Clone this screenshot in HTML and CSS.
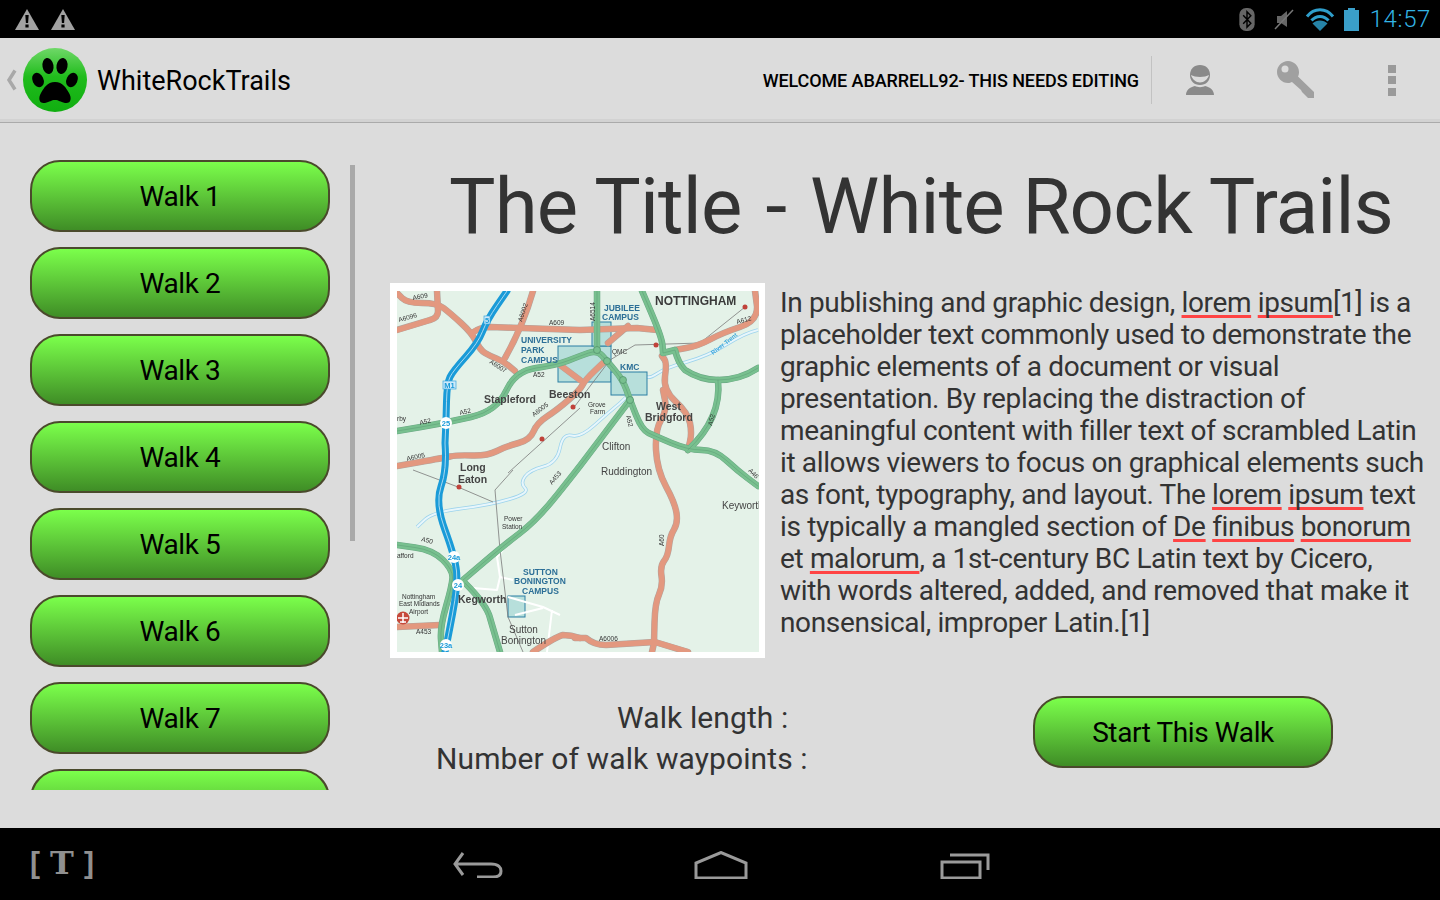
FILE: index.html
```html
<!DOCTYPE html>
<html lang="en">
<head>
<meta charset="utf-8">
<title>WhiteRockTrails</title>
<link rel="stylesheet" href="styles.css">
</head>
<body>
<div class="app">
  <div class="status">
    <div class="status-left">
      <svg class="warn" viewBox="0 0 24 21"><path class="ic-grey" d="M12 0 24 21H0Z"/><path class="ic-black" d="M10.300 6h3.400l-.6 8h-2.200ZM10.400 15.500h3.200v3h-3.200Z"/></svg>
      <svg class="warn" viewBox="0 0 24 21"><path class="ic-grey" d="M12 0 24 21H0Z"/><path class="ic-black" d="M10.300 6h3.400l-.6 8h-2.200ZM10.400 15.500h3.200v3h-3.200Z"/></svg>
    </div>
    <div class="status-right">
      <svg class="ic-bt" viewBox="0 0 16 24"><rect class="ic-dim" width="16" height="24" rx="7"/><path class="ic-blackline" d="M4 7.500 12 16l-4 4V4l4 4-8 8.500"/></svg>
      <svg class="ic-mute" viewBox="0 0 20 22"><path class="ic-dim" d="M3 8h4l6-5v16l-6-4H3Z"/><path class="ic-slash" d="M1 21 19 2"/></svg>
      <svg class="ic-wifi" viewBox="0 0 30 23"><path class="wf" d="M2 8.500C9-.5 21-.5 28 8.500"/><path class="wf" d="M6.500 12.500C11 7 19 7 23.500 12.500"/><path class="wf-dark" d="M15 23 7.500 15.500C11.500 11.500 18.500 11.500 22.500 15.500Z"/></svg>
      <svg class="ic-batt" viewBox="0 0 15 23"><path class="ic-blue" d="M4 0h7v2h4v21H0V2h4Z"/></svg>
      <span class="clock">14:57</span>
    </div>
  </div>

  <header class="bar">
    <svg class="chev" viewBox="0 0 11 22"><path class="chev-line" d="M9 1.500 3 11l6 9.500"/></svg>
    <svg class="logo" viewBox="0 0 64 64">
      <defs><linearGradient id="lg" x1="0" y1="0" x2="0" y2="1"><stop offset="0" stop-color="#6fd868"/><stop offset=".45" stop-color="#20bc1c"/><stop offset="1" stop-color="#10ae10"/></linearGradient></defs>
      <circle cx="32" cy="32" r="32" fill="url(#lg)"/>
      <ellipse cx="15" cy="32" rx="5.500" ry="7.500" transform="rotate(-25 15 32)"/>
      <ellipse cx="25" cy="18" rx="5.500" ry="8" transform="rotate(-10 25 18)"/>
      <ellipse cx="39" cy="18" rx="5.500" ry="8" transform="rotate(10 39 18)"/>
      <ellipse cx="49" cy="32" rx="5.500" ry="7.500" transform="rotate(25 49 32)"/>
      <path d="M32 34C40 34 43 40 46 45 49 50 48 56 42 55 37 54 36 52 32 52 28 52 27 54 22 55 16 56 15 50 18 45 21 40 24 34 32 34Z"/>
    </svg>
    <span class="app-name">WhiteRockTrails</span>
    <span class="welcome">WELCOME ABARRELL92- THIS NEEDS EDITING</span>
    <span class="divider"></span>
    <svg class="act-person" viewBox="0 0 28 30"><path class="ic-person" d="M14 0C20 0 24 4 24 10 24 16 20 20 14 20 8 20 4 16 4 10 4 4 8 0 14 0Z"/><path class="ic-smile" d="M5 10C9 12.500 19 12.500 23 10 22 14 18 17.500 14 17.500 10 17.500 6 14 5 10Z"/><path class="ic-person" d="M9 21C11 22.500 17 22.500 19 21 24 22 28 25 28 30H0C0 25 4 22 9 21Z"/></svg>
    <svg class="act-key" viewBox="0 0 38 38"><path class="ic-keyc" d="M11 0C17 0 22 5 22 11 22 13 21.500 14.500 21 15.500L37 31V37H31L29 35 27 33 25 31 24 29 15 21C14 21.500 12.500 22 11 22 5 22 0 17 0 11 0 5 5 0 11 0Z"/><circle class="ic-keyh" cx="8" cy="8" r="3.500"/></svg>
    <div class="overflow"><i></i><i></i><i></i></div>
  </header>

  <main class="main">
    <aside class="side">
      <div class="list">
        <button class="btn">Walk 1</button>
        <button class="btn">Walk 2</button>
        <button class="btn">Walk 3</button>
        <button class="btn">Walk 4</button>
        <button class="btn">Walk 5</button>
        <button class="btn">Walk 6</button>
        <button class="btn">Walk 7</button>
        <button class="btn">Walk 8</button>
      </div>
      <div class="scroll"></div>
    </aside>
    <section class="detail">
      <h1 class="title">The Title <span class="dash">-</span> White Rock Trails</h1>
      <div class="media">
        <div class="frame">
        <svg class="map" viewBox="7 8 362 361">
          <defs>
            <g id="pink">
              <path d="M7 10 12 15Q17 20 32 20 47 20 53.500 25 60 30 71 40 82 50 86 58.500 90 67 95 70 100 73 106.500 75.500 113 78 119 83L125 88"/>
              <path d="M7 47 40 37Q48 35 48 28L47 8"/>
              <path d="M82 50Q90 44 100 44L190 47 247 45 267 47"/>
              <path d="M143 8Q133 43 115 75"/>
              <path d="M238 43 218 60"/>
              <path d="M7 183 30 179Q53 175 60 173.500 67 172 82 172.500 97 173 107 168 117 163 128.500 160 140 157 143.500 148.500 147 140 157 133.500 167 127 178.500 117 190 107 192.500 102 195 97 205 87.500L215 78"/>
              <path d="M170 82 190 97"/>
              <path d="M272 73 274.500 76.500Q277 80 275 93.500 273 107 285.500 118.500 298 130 300 140 302 150 300 158.500L298 167"/>
              <path d="M273 107 275 117Q277 127 271 137 265 147 266 167 267 187 276 203.500 285 220 286.500 230 288 240 284 246.500 280 253 279 263 278 273 274 278 270 283 271.500 293 273 303 269 311.500 265 320 264.500 340L264 360 262 369"/>
              <path d="M185 355H196Q204 362 216 362L265 359 298 369"/>
              <path d="M143 369Q165 354 173 352 181 352 190 355"/>
              <path d="M7 344 50 342"/>
              <path d="M285 67 296 65Q308 63 320 56.500 332 50 350 44 368 38 367 23L365 8"/>
            </g>
            <g id="green">
              <path d="M7 148 31 144Q55 140 81 134 107 128 116 108 125 88 146 85 167 82 178.500 77.500 190 73 198.500 70 207 67 212 72.500 217 78 225 87.500 233 97 236.500 107 240 117 246 132 252 147 258.500 150 265 153 281.500 160 298 167 311.500 167 325 167 336.500 177.500 348 188 358 195.500L368 203"/>
              <path d="M207 8V67"/>
              <path d="M252 8 262 31.500Q272 55 272.500 62.500L273 70 285 67Q288 80 295 87 310 97 328 97 350 97 368 85"/>
              <path d="M328 97Q332 135 298 167"/>
              <path d="M240 117 222.500 140Q205 163 196 175 187 187 167 212 147 237 130 250 113 263 93 280L73 297"/>
              <path d="M75 300Q97 322 100 335L110 369"/>
              <path d="M7 262 25 264.500Q43 267 53 277 63 287 62.500 295 62 303 56 323.500 50 344 51 356.500L52 369"/>
            </g>
            <path id="blue" d="M117 8 107 22.500Q97 37 92.500 48.500 88 60 75.500 74 63 88 60 94 57 100 56.500 118.500L56 137 55 160Q57 187 51 203.500 45 220 55 247 65 274 66.500 288 68 302 62.500 331 57 360 55 369"/>
            <path id="water" d="M27 244 35 236.500Q43 229 71.500 225.500 100 222 120 216 140 210 135 205 130 200 135 193.500 140 187 153.500 183.500 167 180 170 165 173 150 181.500 152.500 190 155 204 142.500 218 130 230 120 242 110 244.500 98.500 247 87 252.500 92 258 97 266.500 91 275 85 296.500 79 318 73 336.500 61.500 355 50 368 47"/>
          </defs>
          <rect class="land" x="7" y="8" width="362" height="361"/>
          <use href="#water" class="river-o"/><use href="#water" class="river"/>
          <rect class="campus" x="168" y="63" width="53" height="36"/>
          <rect class="campus" x="202" y="39" width="19" height="24"/>
          <rect class="campus" x="221" y="89" width="36" height="23"/>
          <rect class="campus" x="118" y="313" width="17" height="21"/>
          <path class="minor" d="M113 267 107 274 110 294 107 307 83 305M110 294 123 297M118 314 153 324 170 332M162 327 157 369M125 332 153 325"/>
          <path class="rail" d="M190 125 118 190M23 187 68 204 103 219M123 187 105 207 110 267 118 334 133 369M185 123 220 77 245 62 310 60 355 24"/>
          <use href="#pink" class="pink-o"/><use href="#pink" class="pink"/>
          <use href="#green" class="green-o"/><use href="#green" class="green"/><use href="#green" class="green-c"/>
          <use href="#blue" class="blue"/><use href="#blue" class="blue-c"/>
          <g class="dots">
            <circle cx="183" cy="124" r="2.500"/><circle cx="152" cy="156" r="2.500"/><circle cx="266" cy="62" r="2.500"/><circle cx="355" cy="24" r="2.500"/><circle cx="69" cy="204" r="2.500"/>
          </g>
          <g class="nodes">
            <circle cx="207" cy="67" r="3.500"/><circle cx="217" cy="78" r="3.500"/><circle cx="233" cy="97" r="3.500"/><circle cx="240" cy="117" r="3.500"/>
          </g>
          <circle class="junction" cx="56" cy="140" r="6"/><circle class="junction" cx="64" cy="274" r="6"/><circle class="junction" cx="68" cy="302" r="6"/><circle class="junction" cx="56" cy="362" r="6"/>
          <text class="jt" x="56" y="143">25</text><text class="jt" x="64" y="277">24a</text><text class="jt" x="68" y="305">24</text><text class="jt" x="56" y="365">23a</text>
          <rect class="m1" x="53" y="98" width="13" height="8"/><text class="jt" x="59.500" y="105">M1</text>
          <rect class="m1" x="94" y="33" width="6" height="8"/><text class="jt" x="97" y="40">5</text>
          <circle class="airport" cx="13" cy="335" r="6.500"/><path class="plane" d="M13 330V340M8 335H18M10 339H16"/>

          <g class="lb">
            <text transform="translate(23 17) rotate(-10)">A609</text>
            <text transform="translate(9 39) rotate(-15)">A6096</text>
            <text transform="translate(132 39) rotate(-72)">A6002</text>
            <text x="159" y="42">A609</text>
            <text transform="translate(99 80) rotate(32)">A6007</text>
            <text x="143" y="94">A52</text>
            <text transform="translate(144 134) rotate(-38)">A6005</text>
            <text transform="translate(70 132) rotate(-12)">A52</text>
            <text transform="translate(30 142) rotate(-12)">A52</text>
            <text x="7" y="138">rby</text>
            <text transform="translate(17 178) rotate(-12)">A6005</text>
            <text transform="translate(205 38) rotate(-90)">A6514</text>
            <text transform="translate(347 41) rotate(-15)">A612</text>
            <text x="222" y="71">QMC</text>
            <text x="198" y="124">Grove</text><text x="200" y="131">Farm</text>
            <text transform="translate(236 133) rotate(75)">A52</text>
            <text transform="translate(322 143) rotate(-75)">A52</text>
            <text transform="translate(358 188) rotate(45)">A46</text>
            <text transform="translate(274 263) rotate(-90)">A60</text>
            <text x="209" y="358">A6006</text>
            <text transform="translate(162 202) rotate(-50)">A453</text>
            <text x="114" y="238">Power</text><text x="112" y="246">Station</text>
            <text transform="translate(31 258) rotate(15)">A50</text>
            <text x="7" y="275">afford</text>
            <text x="12" y="316">Nottingham</text><text x="9" y="323">East Midlands</text><text x="19" y="331">Airport</text>
            <text x="26" y="351">A453</text>
          </g>
          <g class="lb-blue">
            <text x="131" y="60">UNIVERSITY</text><text x="131" y="70">PARK</text><text x="131" y="80">CAMPUS</text>
            <text x="214" y="28">JUBILEE</text><text x="212" y="37">CAMPUS</text>
            <text x="230" y="87">KMC</text>
            <text x="133" y="292">SUTTON</text><text x="124" y="301">BONINGTON</text><text x="132" y="311">CAMPUS</text>
          </g>
          <text class="lb-river" transform="translate(323 72) rotate(-38)">River Trent</text>
          <g class="lb-town">
            <text x="94" y="120">Stapleford</text><text x="159" y="115">Beeston</text>
            <text x="70" y="188">Long</text><text x="68" y="200">Eaton</text>
            <text x="266" y="127">West</text><text x="255" y="138">Bridgford</text>
            <text x="68" y="320">Kegworth</text>
          </g>
          <g class="lb-city">
            <text x="265" y="22">NOTTINGHAM</text>
          </g>
          <g class="lb-place">
            <text x="212" y="167">Clifton</text><text x="211" y="192">Ruddington</text>
            <text x="332" y="226">Keyworth</text>
            <text x="119" y="350">Sutton</text><text x="111" y="361">Bonington</text>
          </g>
        </svg>
        </div>
        <p class="copy">In publishing and graphic design, <span class="sp">lorem</span> <span class="sp">ipsum</span>[1] is a placeholder text commonly used to demonstrate the graphic elements of a document or visual presentation. By replacing the distraction of meaningful content with filler text of scrambled Latin it allows viewers to focus on graphical elements such as font, typography, and layout. The <span class="sp">lorem</span> <span class="sp">ipsum</span> text is typically a mangled section of <span class="sp">De</span> <span class="sp">finibus</span> <span class="sp">bonorum</span> et <span class="sp">malorum</span>, a 1st-century BC Latin text by Cicero, with words altered, added, and removed that make it nonsensical, improper Latin.[1]</p>
      </div>
      <div class="foot">
        <div class="stats">
          <div class="stat-a">Walk length :</div>
          <div class="stat-b">Number of walk waypoints :</div>
        </div>
        <button class="btn btn-start">Start This Walk</button>
      </div>
    </section>
  </main>

  <nav class="nav">
    <span class="tlogo"><span class="br">[</span><b class="tt">T</b><span class="br">]</span></span>
    <svg class="n-back" viewBox="0 0 50 26"><path class="n" d="M10 1 2 12 10 23M2 12H38C46 12 48 16 48 19 48 23 45 25 40 25H24"/></svg>
    <svg class="n-home" viewBox="0 0 54 28"><path class="n" d="M2 27V12L27 1.500 52 12V27Z"/></svg>
    <svg class="n-rec" viewBox="0 0 50 26"><path class="n" d="M2 9H40V25H2ZM10 2H48V17"/></svg>
  </nav>
</div>
</body>
</html>
```
FILE: styles.css
```css
* { box-sizing: border-box; }
html, body { margin: 0; padding: 0; }
body { font-family: Roboto, "Liberation Sans", sans-serif; background: #000; }
svg { display: block; flex: none; }

.app { width: 1440px; height: 900px; display: flex; flex-direction: column; overflow: hidden; background: #dcdcdc; }

/* status bar */
.status { height: 38px; flex: none; background: #000; display: flex; justify-content: space-between; align-items: center; padding: 0 9px 0 15px; }
.status-left { display: flex; gap: 12px; }
.status-right { display: flex; align-items: center; }
.warn { width: 24px; height: 21px; }
.ic-grey { fill: #a2a2a2; }
.ic-black { fill: #000; }
.ic-dim { fill: #666; }
.ic-bt { width: 16px; height: 23px; }
.ic-blackline { fill: none; stroke: #000; stroke-width: 1.500; }
.ic-mute { width: 20px; height: 22px; margin-left: 19px; }
.ic-slash { stroke: #777; stroke-width: 1.500; fill: none; }
.ic-wifi { width: 30px; height: 23px; margin-left: 11px; }
.wf { fill: none; stroke: #2f9ecb; stroke-width: 3; }
.wf-dark { fill: #2684a8; }
.ic-batt { width: 15px; height: 23px; margin-left: 9px; }
.ic-blue { fill: #3a9fca; }
.clock { color: #33b5e5; font-size: 24px; letter-spacing: .6px; margin-left: 11px; line-height: 38px; font-weight: 300; }

/* action bar */
.bar { height: 85px; flex: none; display: flex; align-items: center; background: #dcdcdc; border-bottom: 1px solid #aaa; box-shadow: inset 0 -3px 0 #d2d2d2; padding: 0 0 0 6px; }
.chev { width: 11px; height: 22px; }
.chev-line { fill: none; stroke: #a8a8a8; stroke-width: 3.500; }
.logo { width: 64px; height: 64px; margin-left: 6px; }
.app-name { font-size: 27px; color: #000; margin-left: 10px; padding-top: 2px; }
.welcome { margin-left: auto; font-size: 18px; font-weight: 500; color: #000; letter-spacing: -.1px; }
.divider { width: 1px; height: 48px; background: #c2c2c2; margin-left: 12px; }
.act-person { width: 28px; height: 30px; margin-left: 34px; }
.ic-person { fill: #8a8a8a; }
.ic-smile { fill: #dcdcdc; }
.act-key { width: 38px; height: 38px; margin-left: 63px; }
.ic-keyc { fill: #a0a0a0; }
.ic-keyh { fill: #dcdcdc; }
.overflow { display: flex; flex-direction: column; gap: 3.500px; margin-left: 73px; margin-right: 44px; }
.overflow i { display: block; width: 8px; height: 8px; background: #9a9a9a; }

/* main */
.main { flex: 1; min-height: 0; display: flex; background: #dcdcdc; }
.side { width: 390px; flex: none; padding: 37px 0 0 30px; position: relative; }
.list { width: 300px; height: 630px; overflow: hidden; display: flex; flex-direction: column; gap: 15px; }
.scroll { position: absolute; left: 350px; top: 42px; width: 5px; height: 376px; background: #a9a9a9; }
.btn { width: 300px; height: 72px; flex: none; border: 2px solid #4a4a2c; border-radius: 30px; background: linear-gradient(#7bff4b, #3f8d26); color: #000; font-family: Roboto, "Liberation Sans", sans-serif; font-size: 28px; letter-spacing: -.4px; padding: 0; }

.detail { flex: 1; min-width: 0; display: flex; flex-direction: column; }
.title { margin: 38px 0 0 0; padding-left: 12px; height: 92px; text-align: center; font-size: 78px; line-height: 92px; font-weight: 400; letter-spacing: -.85px; color: #333; white-space: nowrap; }
.dash { margin: 0 5.500px; }
.media { display: flex; gap: 15px; margin-top: 30px; }
.frame { width: 375px; height: 375px; flex: none; background: #fff; padding: 8px 6px 6px 7px; }
.map { width: 362px; height: 361px; filter: blur(.35px); }
.copy { margin: 4px 0 0 0; width: 648px; font-size: 28px; line-height: 32px; letter-spacing: -.36px; color: #333; }
.sp { text-decoration: underline; text-decoration-color: #f44; text-decoration-thickness: 3px; text-underline-offset: 3px; text-decoration-skip-ink: none; }

.foot { display: flex; margin-top: 38px; }
.stats { width: 643px; font-size: 30px; line-height: 41px; letter-spacing: .1px; color: #333; padding-top: 1px; }
.stat-a { padding-left: 227px; }
.stat-b { padding-left: 46px; }
.btn-start { flex: none; }

/* map */
.land { fill: #e4f2e8; }
.river-o { fill: none; stroke: #9cd3ec; stroke-width: 3.500; stroke-linejoin: round; }
.river { fill: none; stroke: #e8f6fb; stroke-width: 2; stroke-linejoin: round; }
.campus { fill: #b7dfdb; stroke: #2a7fa3; stroke-width: 1; }
.minor { fill: none; stroke: #fff; stroke-width: 2; stroke-linejoin: round; }
.rail { fill: none; stroke: #7a7a7a; stroke-width: .8; stroke-linejoin: round; }
.pink-o, .pink, .green-o, .green, .green-c, .blue, .blue-c { fill: none; stroke-linejoin: round; stroke-linecap: round; }
.pink-o { stroke: #b0a39d; stroke-width: 6.500; }
.pink { stroke: #e3987f; stroke-width: 5.500; }
.green-o { stroke: #6aa884; stroke-width: 6.500; }
.green { stroke: #78c08f; stroke-width: 5.500; }
.green-c { stroke: #5a9a74; stroke-width: .5; }
.blue { stroke: #1a9bd8; stroke-width: 7; }
.blue-c { stroke: #cfeaf6; stroke-width: .8; }
.dots circle { fill: #c0423a; }
.nodes circle { fill: #78c08f; stroke: #4f8f68; stroke-width: .7; }
.junction { fill: #fff; }
.m1 { fill: #cdeafa; stroke: #3aa6dc; stroke-width: .7; }
.jt { font: 700 7.500px "Liberation Sans", sans-serif; fill: #1a9bd8; text-anchor: middle; }
.airport { fill: #c64a3c; }
.plane { stroke: #fff; stroke-width: 1.500; fill: none; }
.lb text { font: 6.500px "Liberation Sans", sans-serif; fill: #333; }
.lb-blue text { font: 700 8.500px "Liberation Sans", sans-serif; fill: #2c6f97; }
.lb-river { font: 700 6px "Liberation Sans", sans-serif; fill: #3aa6dc; }
.lb-town text { font: 700 10.500px "Liberation Sans", sans-serif; fill: #444; }
.lb-city text { font: 700 12px "Liberation Sans", sans-serif; fill: #3a3a3a; }
.lb-place text { font: 10px "Liberation Sans", sans-serif; fill: #444; }

/* nav */
.nav { height: 72px; flex: none; background: #000; display: flex; align-items: flex-start; }
.n { fill: none; stroke: #9a9a9a; stroke-width: 3; }
.tlogo { width: 64px; margin: 17px 0 0 30px; display: flex; justify-content: space-between; align-items: center; color: #909090; height: 36px; font-family: "DejaVu Serif", serif; }
.br { font-size: 30px; font-weight: 700; font-family: "Liberation Sans", sans-serif; }
.tt { font-size: 32px; }
.n-back { width: 50px; height: 26px; margin: 24px 0 0 359px; }
.n-home { width: 54px; height: 28px; margin: 23px 0 0 191px; }
.n-rec { width: 50px; height: 26px; margin: 25px 0 0 192px; }
```
